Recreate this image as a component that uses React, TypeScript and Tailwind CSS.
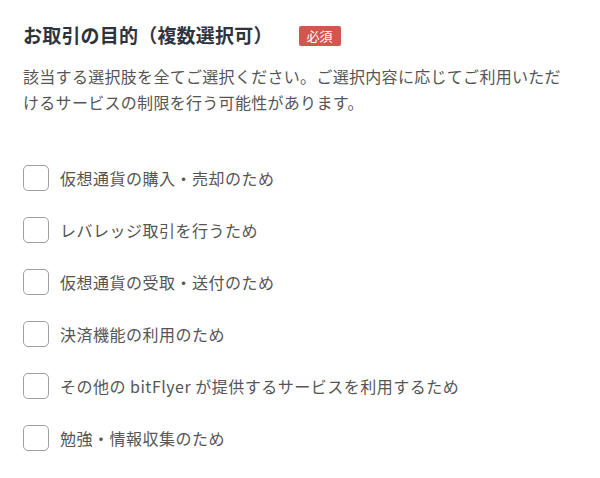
const PURPOSES = [
  '仮想通貨の購入・売却のため',
  'レバレッジ取引を行うため',
  '仮想通貨の受取・送付のため',
  '決済機能の利用のため',
  'その他の bitFlyer が提供するサービスを利用するため',
  '勉強・情報収集のため',
];

export default function App() {
  return (
    <div
      className="w-[600px] h-[478px] bg-white pl-[23px] pr-[30px] pt-[21px]"
      style={{ fontFamily: '"Noto Sans CJK JP", "Noto Sans", sans-serif' }}
    >
      <div className="flex items-center h-[28px]">
        <h2 className="text-[19px] font-bold leading-[28px] text-[#2e343d] tracking-[0.2px]">
          お取引の目的（複数選択可）
        </h2>
        <span className="ml-[26px] mt-[1px] w-[42px] h-[20px] flex items-center justify-center rounded-[2px] bg-[#d2564e] text-white text-[13px] leading-none">
          必須
        </span>
      </div>

      <p className="mt-[14px] text-[16px] leading-[26px] text-[#555555] tracking-[0.3px]">
        該当する選択肢を全てご選択ください。ご選択内容に応じてご利用いただけるサービスの制限を行う可能性があります。
      </p>

      <ul className="mt-[37px]">
        {PURPOSES.map((label) => (
          <li key={label} className="flex items-center h-[52px]">
            <span className="w-[26px] h-[26px] shrink-0 rounded-[5px] border-[1.5px] border-[#a0a0a0] bg-white" />
            <span className="ml-[11px] text-[16px] text-[#555555] tracking-[0.5px]">{label}</span>
          </li>
        ))}
      </ul>
    </div>
  );
}
